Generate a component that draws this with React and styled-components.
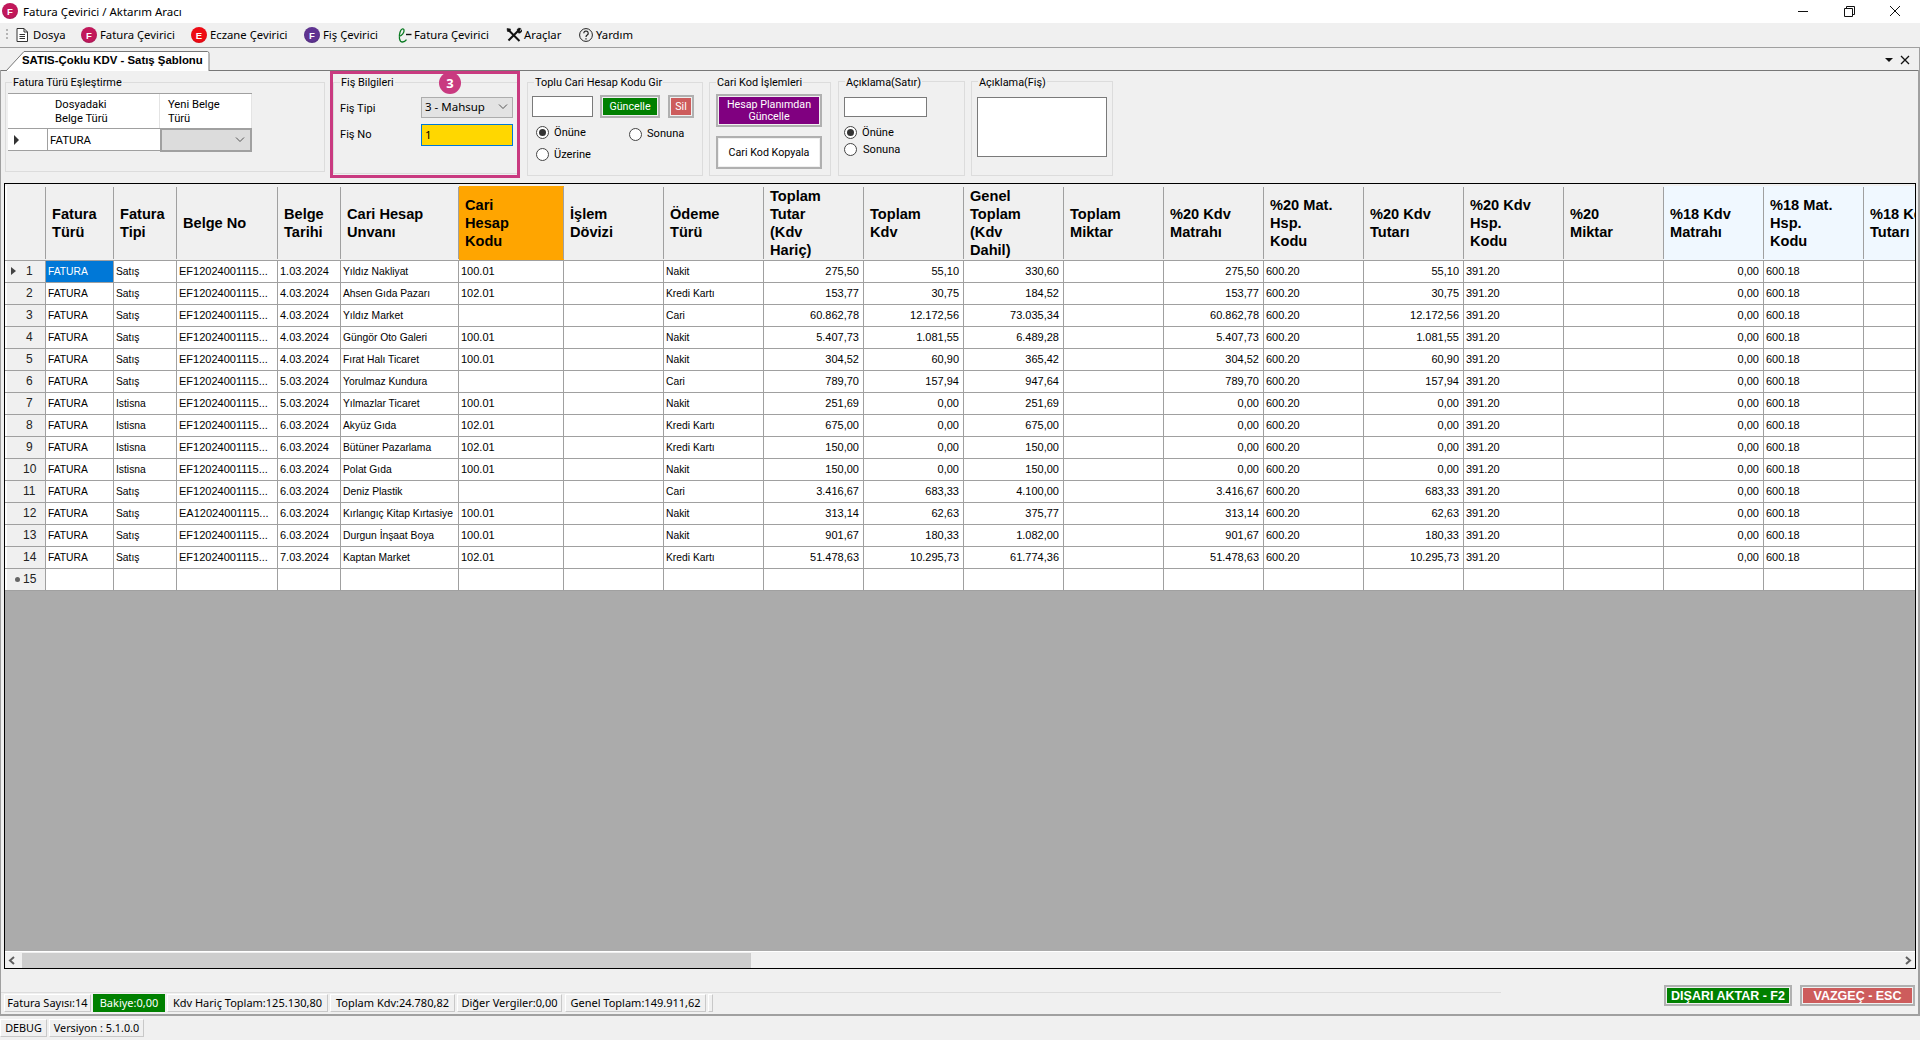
import React from "react";
import styled, { createGlobalStyle, css } from "styled-components";

const UI = `"Noto Sans", "Liberation Sans", sans-serif`;
const LABEL = `Roboto, "Liberation Sans", sans-serif`;
const GRID = `"Liberation Sans", Arial, sans-serif`;

const GlobalStyle = createGlobalStyle`
  html, body { margin: 0; padding: 0; background: #f0f0f0; overflow: hidden; }
  * { box-sizing: border-box; }
`;

const at = css`
  position: absolute;
  left: ${(p) => p.$x}px;
  top: ${(p) => p.$y}px;
  width: ${(p) => (p.$w ? `${p.$w}px` : "auto")};
  height: ${(p) => (p.$h ? `${p.$h}px` : "auto")};
`;

const Page = styled.div`
  position: relative;
  width: 1920px;
  height: 1040px;
  background: #f0f0f0;
  overflow: hidden;
  font-family: ${UI};
  font-size: 11px;
  color: #000;
`;

const TitleBar = styled.div`
  position: absolute;
  left: 0;
  top: 0;
  width: 1920px;
  height: 23px;
  background: #fff;
`;
const TitleText = styled.span`
  position: absolute;
  left: 23px;
  top: 3px;
  font-size: 11.5px;
  line-height: 18px;
`;
const WinIcon = styled.svg`
  position: absolute;
  left: ${(p) => p.$x}px;
  top: 4px;
  width: 14px;
  height: 14px;
  fill: none;
  stroke: #111;
  stroke-width: 1;
`;

const LogoDot = styled.span`
  ${at};
  width: 16px;
  height: 16px;
  border-radius: 50%;
  background: radial-gradient(circle at 50% 45%, ${(p) => p.$color} 55%, ${(p) => p.$edge} 100%);
  color: #fff;
  font: bold 9.5px ${GRID};
  display: flex;
  align-items: center;
  justify-content: center;
`;

const MenuBar = styled.div`
  position: absolute;
  left: 0;
  top: 23px;
  width: 1920px;
  height: 24px;
  background: #f0f0f0;
`;
const Grip = styled.span`
  position: absolute;
  left: 6px;
  top: 6px;
  width: 2px;
  height: 12px;
  background-image: linear-gradient(#b5b5b5 50%, transparent 50%);
  background-size: 2px 4px;
`;
const MenuText = styled.span`
  position: absolute;
  left: ${(p) => p.$x}px;
  top: 3px;
  font-size: 11.3px;
  line-height: 18px;
  white-space: nowrap;
`;
const MenuIcon = styled.svg`
  position: absolute;
  left: ${(p) => p.$x}px;
  top: 4px;
  width: 16px;
  height: 16px;
`;

const TabStrip = styled.div`
  position: absolute;
  left: 0;
  top: 47px;
  width: 1920px;
  height: 24px;
  border-top: 1px solid #a0a0a0;
  border-bottom: 1px solid #777;
  border-right: 1px solid #a0a0a0;
`;
const TabShape = styled.svg`
  position: absolute;
  left: 6px;
  top: 3px;
  width: 204px;
  height: 20px;
`;
const TabLabel = styled.span`
  position: absolute;
  left: 22px;
  top: 4px;
  font: bold 11.4px/16px ${GRID};
  white-space: nowrap;
`;
const StripGlyph = styled.svg`
  position: absolute;
  left: ${(p) => p.$x}px;
  top: 7px;
  width: 10px;
  height: 10px;
`;

const Panel = styled.div`
  position: absolute;
  left: 0;
  top: 70px;
  width: 1920px;
  height: 946px;
  border-left: 1px solid #a0a0a0;
  border-right: 2px solid #a0a0a0;
  border-bottom: 2px solid #a0a0a0;
`;

const GroupBox = styled.div`
  ${at};
  border: 1px solid #dcdcdc;
`;
const Legend = styled.span`
  position: absolute;
  left: 6px;
  top: ${(p) => p.$top || -8}px;
  padding: 0 1px;
  background: #f0f0f0;
  font-family: ${LABEL};
  font-size: 10.9px;
  line-height: 16px;
  white-space: nowrap;
`;

const Label = styled.span`
  ${at};
  font-family: ${LABEL};
  font-size: 11.1px;
  line-height: 16px;
  white-space: nowrap;
`;

const MapGrid = styled.div`
  position: absolute;
  left: 8px;
  top: 93px;
  width: 244px;
  height: 58px;
  background: #fff;
  border-top: 1px solid #a0a0a0;
`;
const MapHead = styled.div`
  ${at};
  border-right: 1px solid #e4e4e4;
  padding: 4px 0 0 8px;
  font-family: ${LABEL};
  font-size: 11.2px;
  line-height: 14px;
  white-space: pre-line;
`;
const MapLine = styled.div`
  position: absolute;
  left: 0;
  top: 34px;
  width: 244px;
  height: 23px;
  border-top: 1px solid #a0a0a0;
  border-bottom: 1px solid #a0a0a0;
`;
const MapArrow = styled.span`
  position: absolute;
  left: 6px;
  top: 6px;
  border-left: 5px solid #333;
  border-top: 5px solid transparent;
  border-bottom: 5px solid transparent;
`;
const MapDivider = styled.span`
  position: absolute;
  left: 39px;
  top: 0;
  height: 22px;
  width: 1px;
  background: #a0a0a0;
`;
const MapValue = styled.span`
  position: absolute;
  left: 42px;
  top: 3px;
  font-family: ${LABEL};
  font-size: 11.5px;
  line-height: 16px;
`;
const MapCombo = styled.div`
  position: absolute;
  left: 152px;
  top: -1px;
  width: 92px;
  height: 24px;
  background: #dcdcdc;
  border: 2px solid #a0a0a0;
`;

const Combo = styled.div`
  ${at};
  background: #e3e3e3;
  border: 1px solid #adadad;
  padding-left: 3px;
  font-size: 11.5px;
  line-height: 18px;
`;
const Chevron = styled.svg`
  position: absolute;
  right: ${(p) => p.$right || 4}px;
  top: ${(p) => p.$top || 5}px;
  width: 10px;
  height: 8px;
  fill: none;
  stroke: #555;
  stroke-width: 1;
`;
const TextInput = styled.div`
  ${at};
  background: #fff;
  border: 1px solid #7a7a7a;
`;
const CodeInput = styled.div`
  ${at};
  background: #ffd700;
  border: 1px solid #0078d7;
  padding-left: 3px;
  font-size: 11.5px;
  line-height: 19px;
`;

const Highlight = styled.div`
  position: absolute;
  left: 330px;
  top: 71px;
  width: 190px;
  height: 107px;
  border: 3px solid #c93a80;
`;
const StepBadge = styled.span`
  position: absolute;
  left: 439px;
  top: 72px;
  width: 22px;
  height: 22px;
  border-radius: 50%;
  background: #c93a80;
  color: #fff;
  font: bold 13px/22px ${UI};
  text-align: center;
`;

const ActionButton = styled.button`
  ${at};
  padding: 0;
  border: 2px solid #b0b0b0;
  outline: 1px solid #f0f0f0;
  outline-offset: -3px;
  background: ${(p) => p.$bg};
  color: ${(p) => p.$fg || "#fff"};
  font-family: ${LABEL};
  font-size: 10.7px;
  line-height: 12px;
  text-align: center;
`;
const FooterButton = styled(ActionButton)`
  font: bold 12.5px ${GRID};
`;

const Radio = styled.span`
  ${at};
  width: 13px;
  height: 13px;
  border-radius: 50%;
  background: #fff;
  border: 1px solid #444;
  ${(p) =>
    p.$on &&
    css`
      &::after {
        content: "";
        position: absolute;
        left: 2px;
        top: 2px;
        width: 7px;
        height: 7px;
        border-radius: 50%;
        background: #333;
      }
    `}
`;

const GridBox = styled.div`
  position: absolute;
  left: 4px;
  top: 183px;
  width: 1912px;
  height: 786px;
  background: #ababab;
  border: 1px solid #000;
  overflow: hidden;
  font-family: ${GRID};
`;
const HeaderRow = styled.div`
  display: flex;
  width: 2200px;
  height: 77px;
  background: #f0f0f0;
  border-bottom: 1px solid #a0a0a0;
`;
const HeaderCell = styled.div`
  position: relative;
  flex: none;
  width: ${(p) => p.$w}px;
  height: 74px;
  display: flex;
  align-items: center;
  padding-left: 6px;
  margin-top: 2px;
  background: ${(p) => p.$bg || "#f0f0f0"};
  font-size: 14.6px;
  font-weight: bold;
  line-height: 18px;
  white-space: pre-line;
  &::after {
    content: "";
    position: absolute;
    right: 0;
    top: 1px;
    bottom: 1px;
    width: 1px;
    background: #a0a0a0;
  }
`;
const CornerCell = styled(HeaderCell)`
  width: 41px;
  padding: 0;
  border-left: 2px solid #fff;
`;
const DataRow = styled.div`
  display: flex;
  width: 2200px;
  height: 22px;
  background: #fff;
  border-bottom: 1px solid #a0a0a0;
`;
const RowHead = styled.div`
  position: relative;
  flex: none;
  width: 41px;
  height: 21px;
  background: #f0f0f0;
  border-left: 2px solid #fff;
  border-right: 1px solid #a0a0a0;
  font-size: 12px;
  line-height: 20px;
  padding-left: ${(p) => (p.$wide ? 16 : 19)}px;
  color: #222;
`;
const RowArrow = styled.span`
  position: absolute;
  left: 4px;
  top: 6px;
  border-left: 5px solid #444;
  border-top: 4px solid transparent;
  border-bottom: 4px solid transparent;
`;
const NewDot = styled.span`
  position: absolute;
  left: 8px;
  top: 8px;
  width: 5px;
  height: 5px;
  border-radius: 50%;
  background: #666;
`;
const Cell = styled.div`
  flex: none;
  width: ${(p) => p.$w}px;
  height: 21px;
  padding: 0 ${(p) => (p.$right ? 4 : 2)}px 0 2px;
  border-right: 1px solid #a0a0a0;
  background: ${(p) => (p.$active ? "#0078d7" : "#fff")};
  color: ${(p) => (p.$active ? "#fff" : "#000")};
  font-size: ${(p) => (p.$tight ? 10.3 : 11)}px;
  line-height: ${(p) => (p.$tight ? 22 : 20)}px;
  text-align: ${(p) => (p.$right ? "right" : "left")};
  white-space: nowrap;
  overflow: hidden;
`;

const HScroll = styled.div`
  position: absolute;
  left: 0;
  bottom: 0;
  width: 100%;
  height: 17px;
  background: #f0f0f0;
  border-top: 1px solid #fff;
`;
const ScrollThumb = styled.div`
  position: absolute;
  left: 17px;
  top: 1px;
  width: 729px;
  height: 15px;
  background: #cdcdcd;
`;
const ScrollArrow = styled.svg`
  position: absolute;
  ${(p) => (p.$end ? "right: 3px;" : "left: 3px;")}
  top: 4px;
  width: 8px;
  height: 9px;
  fill: none;
  stroke: #606060;
  stroke-width: 2;
`;

const SummaryStrip = styled.div`
  position: absolute;
  left: 1px;
  top: 992px;
  width: 1500px;
  height: 23px;
  border-top: 1px solid #dcdcdc;
`;
const SummaryCell = styled.span`
  ${at};
  top: 1px;
  height: 18px;
  background: ${(p) => (p.$green ? "#008000" : "#f0f0f0")};
  color: ${(p) => (p.$green ? "#fff" : "#000")};
  border: 1px solid;
  border-color: ${(p) => (p.$green ? "#008000" : "#fff #c8c8c8 #c8c8c8 #fff")};
  font-size: 11px;
  line-height: 16px;
  text-align: center;
  white-space: nowrap;
`;
const StatusStrip = styled.div`
  position: absolute;
  left: 0;
  top: 1017px;
  width: 1920px;
  height: 23px;
`;
const StatusCell = styled.span`
  ${at};
  top: 2px;
  height: 18px;
  border: 1px solid;
  border-color: #fff #c8c8c8 #c8c8c8 #fff;
  font-size: 10.8px;
  line-height: 16px;
  text-align: center;
  white-space: nowrap;
`;

const columns = [
  ["Fatura\nTürü", 68],
  ["Fatura\nTipi", 63],
  ["Belge No", 101],
  ["Belge\nTarihi", 63],
  ["Cari Hesap\nUnvanı", 118],
  ["Cari\nHesap\nKodu", 105, "#ffa500"],
  ["İşlem\nDövizi", 100],
  ["Ödeme\nTürü", 100],
  ["Toplam\nTutar\n(Kdv\nHariç)", 100],
  ["Toplam\nKdv", 100],
  ["Genel\nToplam\n(Kdv\nDahil)", 100],
  ["Toplam\nMiktar", 100],
  ["%20 Kdv\nMatrahı", 100],
  ["%20 Mat.\nHsp.\nKodu", 100],
  ["%20 Kdv\nTutarı", 100],
  ["%20 Kdv\nHsp.\nKodu", 100],
  ["%20\nMiktar", 100],
  ["%18 Kdv\nMatrahı", 100, "#f0f8ff"],
  ["%18 Mat.\nHsp.\nKodu", 100, "#f0f8ff"],
  ["%18 Kdv\nTutarı", 100, "#f0f8ff"],
];

const rows = [
  ["Satış", "EF12024001115...", "1.03.2024", "Yıldız Nakliyat", "100.01", "Nakit", "275,50", "55,10", "330,60"],
  ["Satış", "EF12024001115...", "4.03.2024", "Ahsen Gıda Pazarı", "102.01", "Kredi Kartı", "153,77", "30,75", "184,52"],
  ["Satış", "EF12024001115...", "4.03.2024", "Yıldız Market", "", "Cari", "60.862,78", "12.172,56", "73.035,34"],
  ["Satış", "EF12024001115...", "4.03.2024", "Güngör Oto Galeri", "100.01", "Nakit", "5.407,73", "1.081,55", "6.489,28"],
  ["Satış", "EF12024001115...", "4.03.2024", "Fırat Halı Ticaret", "100.01", "Nakit", "304,52", "60,90", "365,42"],
  ["Satış", "EF12024001115...", "5.03.2024", "Yorulmaz Kundura", "", "Cari", "789,70", "157,94", "947,64"],
  ["Istisna", "EF12024001115...", "5.03.2024", "Yılmazlar Ticaret", "100.01", "Nakit", "251,69", "0,00", "251,69"],
  ["Istisna", "EF12024001115...", "6.03.2024", "Akyüz Gıda", "102.01", "Kredi Kartı", "675,00", "0,00", "675,00"],
  ["Istisna", "EF12024001115...", "6.03.2024", "Bütüner Pazarlama", "102.01", "Kredi Kartı", "150,00", "0,00", "150,00"],
  ["Istisna", "EF12024001115...", "6.03.2024", "Polat Gıda", "100.01", "Nakit", "150,00", "0,00", "150,00"],
  ["Satış", "EF12024001115...", "6.03.2024", "Deniz Plastik", "", "Cari", "3.416,67", "683,33", "4.100,00"],
  ["Satış", "EA12024001115...", "6.03.2024", "Kırlangıç Kitap Kırtasiye", "100.01", "Nakit", "313,14", "62,63", "375,77"],
  ["Satış", "EF12024001115...", "6.03.2024", "Durgun İnşaat Boya", "100.01", "Nakit", "901,67", "180,33", "1.082,00"],
  ["Satış", "EF12024001115...", "7.03.2024", "Kaptan Market", "102.01", "Kredi Kartı", "51.478,63", "10.295,73", "61.774,36"],
];

const rightCols = [8, 9, 10, 12, 14, 17];
const tightCols = [0, 1, 4, 7];

function rowCells(r) {
  const [tipi, belge, tarih, unvan, kod, odeme, tutar, kdv, genel] = r;
  const istisna = tipi === "Istisna";
  return [
    "FATURA", tipi, belge, tarih, unvan, kod, "", odeme, tutar, kdv, genel, "",
    istisna ? "0,00" : tutar, "600.20", kdv, "391.20", "", "0,00", "600.18", "",
  ];
}

function Grid() {
  return (
    <GridBox>
      <HeaderRow>
        <CornerCell $w={41} />
        {columns.map(([title, w, bg]) => (
          <HeaderCell key={title} $w={w} $bg={bg}>
            {title}
          </HeaderCell>
        ))}
      </HeaderRow>
      {rows.map((r, i) => (
        <DataRow key={i}>
          <RowHead $wide={i >= 9}>
            {i === 0 && <RowArrow />}
            {i + 1}
          </RowHead>
          {rowCells(r).map((v, c) => (
            <Cell
              key={c}
              $w={columns[c][1]}
              $right={rightCols.includes(c)}
              $tight={tightCols.includes(c)}
              $active={i === 0 && c === 0}
            >
              {v}
            </Cell>
          ))}
        </DataRow>
      ))}
      <DataRow>
        <RowHead $wide>
          <NewDot />
          15
        </RowHead>
        {columns.map(([title, w]) => (
          <Cell key={title} $w={w} />
        ))}
      </DataRow>
      <HScroll>
        <ScrollArrow viewBox="0 0 8 9">
          <path d="M6 1 2 4.5 6 8" />
        </ScrollArrow>
        <ScrollThumb />
        <ScrollArrow $end viewBox="0 0 8 9">
          <path d="M2 1 6 4.5 2 8" />
        </ScrollArrow>
      </HScroll>
    </GridBox>
  );
}

function Menu() {
  return (
    <MenuBar>
      <Grip />
      <MenuIcon $x={14} viewBox="0 0 16 16" fill="none" stroke="#333" strokeWidth="1">
        <path d="M3 1.5h7l3.5 3.5v9.5h-10.5z" fill="#fff" />
        <path d="M10 1.5v3.5h3.5M5.5 7.5h5.5M5.5 9.5h5.5M5.5 11.5h5.5" />
      </MenuIcon>
      <MenuText $x={33}>Dosya</MenuText>
      <LogoDot $x={81} $y={4} $color="#c2185b" $edge="#7c1a4b">F</LogoDot>
      <MenuText $x={100}>Fatura Çevirici</MenuText>
      <LogoDot $x={191} $y={4} $color="#ee0a14" $edge="#b80a14">E</LogoDot>
      <MenuText $x={210}>Eczane Çevirici</MenuText>
      <LogoDot $x={304} $y={4} $color="#5f3391" $edge="#3c2363">F</LogoDot>
      <MenuText $x={323}>Fiş Çevirici</MenuText>
      <MenuIcon $x={396} viewBox="0 0 16 16" fill="none" stroke="#0a7a22" strokeWidth="1.3">
        <path d="M3 9.5C6 8.5 8.5 5.5 8 3 7.5.9 5 1.8 4 5.2 2.8 9 3 15 6.5 15c1.6 0 3-1 4-2.4" />
        <path d="M10 7.5h5.5" stroke="#111" strokeWidth="1.4" />
      </MenuIcon>
      <MenuText $x={414}>Fatura Çevirici</MenuText>
      <MenuIcon $x={506} viewBox="0 0 16 16" fill="none" stroke="#111">
        <path d="M2 2.5 13.5 14" strokeWidth="2" />
        <path d="M14 2 2.5 13.5" strokeWidth="2" />
        <path d="M1 1.5 4.5 2 4 4.5 1.5 4.5z" fill="#111" strokeWidth="0.6" />
        <path d="M11 2.5a3 3 0 0 1 4-1l-2 2 1 1 2-2a3 3 0 0 1-3.6 3.6z" fill="#111" strokeWidth="0.4" />
      </MenuIcon>
      <MenuText $x={524}>Araçlar</MenuText>
      <MenuIcon $x={578} viewBox="0 0 16 16" fill="none" stroke="#222" strokeWidth="1">
        <circle cx="8" cy="8" r="6.4" />
        <path d="M5.8 6.2a2.2 2.2 0 1 1 3.4 1.9c-.8.5-1.2.9-1.2 1.9" strokeWidth="1.2" />
        <path d="M8 11.2v1.4" strokeWidth="1.3" />
      </MenuIcon>
      <MenuText $x={596}>Yardım</MenuText>
    </MenuBar>
  );
}

export default function App() {
  return (
    <Page>
      <GlobalStyle />
      <TitleBar>
        <LogoDot $x={2} $y={3} $color="#c2185b" $edge="#7c1a4b">F</LogoDot>
        <TitleText>Fatura Çevirici / Aktarım Aracı</TitleText>
        <WinIcon $x={1797} viewBox="0 0 14 14">
          <path d="M1 7.5h10" />
        </WinIcon>
        <WinIcon $x={1842} viewBox="0 0 14 14">
          <path d="M2.5 4.5h8v8h-8zM4.5 4.5v-2h8v8h-2" />
        </WinIcon>
        <WinIcon $x={1888} viewBox="0 0 14 14">
          <path d="M2 2l10 10M12 2 2 12" />
        </WinIcon>
      </TitleBar>
      <Menu />
      <TabStrip>
        <TabShape viewBox="0 0 204 20">
          <path d="M0 20 18 .5H201.5a2 2 0 0 1 1.5 2V20" fill="#fff" stroke="#777" />
        </TabShape>
        <TabLabel>SATIS-Çoklu KDV - Satış Şablonu</TabLabel>
        <StripGlyph $x={1884} viewBox="0 0 10 10">
          <path d="M1 3h8L5 7z" fill="#111" />
        </StripGlyph>
        <StripGlyph $x={1900} viewBox="0 0 10 10">
          <path d="M1 1l8 8M9 1 1 9" stroke="#111" strokeWidth="1.3" />
        </StripGlyph>
      </TabStrip>
      <Panel />

      <GroupBox $x={5} $y={82} $w={320} $h={90}>
        <Legend>Fatura Türü Eşleştirme</Legend>
      </GroupBox>
      <MapGrid>
        <MapHead $x={39} $y={0} $w={113} $h={34}>{"Dosyadaki\nBelge Türü"}</MapHead>
        <MapHead $x={152} $y={0} $w={92} $h={34}>{"Yeni Belge\nTürü"}</MapHead>
        <MapLine>
          <MapArrow />
          <MapDivider />
          <MapValue>FATURA</MapValue>
          <MapCombo>
            <Chevron $top={6} $right={5} viewBox="0 0 10 8">
              <path d="M1 1.5 5 5.5 9 1.5" />
            </Chevron>
          </MapCombo>
        </MapLine>
      </MapGrid>

      <GroupBox $x={333} $y={82} $w={185} $h={92}>
        <Legend>Fiş Bilgileri</Legend>
      </GroupBox>
      <Highlight />
      <StepBadge>3</StepBadge>
      <Label $x={340} $y={101}>Fiş Tipi</Label>
      <Combo $x={421} $y={97} $w={92} $h={21}>
        3 - Mahsup
        <Chevron viewBox="0 0 10 8">
          <path d="M1 1.5 5 5.5 9 1.5" />
        </Chevron>
      </Combo>
      <Label $x={340} $y={127}>Fiş No</Label>
      <CodeInput $x={421} $y={124} $w={92} $h={22}>1</CodeInput>

      <GroupBox $x={527} $y={82} $w={176} $h={94}>
        <Legend>Toplu Cari Hesap Kodu Gir</Legend>
      </GroupBox>
      <TextInput $x={532} $y={96} $w={61} $h={21} />
      <ActionButton $x={600} $y={95} $w={60} $h={23} $bg="#008000">Güncelle</ActionButton>
      <ActionButton $x={668} $y={95} $w={26} $h={23} $bg="#cd5c5c">Sil</ActionButton>
      <Radio $on $x={536} $y={126} />
      <Label $x={554} $y={125}>Önüne</Label>
      <Radio $x={629} $y={128} />
      <Label $x={647} $y={126}>Sonuna</Label>
      <Radio $x={536} $y={148} />
      <Label $x={554} $y={147}>Üzerine</Label>

      <GroupBox $x={709} $y={82} $w={122} $h={94}>
        <Legend>Cari Kod İşlemleri</Legend>
      </GroupBox>
      <ActionButton $x={716} $y={94} $w={106} $h={33} $bg="#800080">
        Hesap Planımdan
        <br />
        Güncelle
      </ActionButton>
      <ActionButton $x={716} $y={136} $w={106} $h={33} $bg="#fff" $fg="#000">
        Cari Kod Kopyala
      </ActionButton>

      <GroupBox $x={838} $y={81} $w={127} $h={95}>
        <Legend $top={-7}>Açıklama(Satır)</Legend>
      </GroupBox>
      <TextInput $x={844} $y={97} $w={83} $h={20} />
      <Radio $on $x={844} $y={126} />
      <Label $x={862} $y={125}>Önüne</Label>
      <Radio $x={844} $y={143} />
      <Label $x={863} $y={142}>Sonuna</Label>

      <GroupBox $x={971} $y={81} $w={142} $h={95}>
        <Legend $top={-7}>Açıklama(Fiş)</Legend>
      </GroupBox>
      <TextInput $x={977} $y={97} $w={130} $h={60} />

      <Grid />

      <FooterButton $x={1664} $y={985} $w={128} $h={21} $bg="#008000">DIŞARI AKTAR - F2</FooterButton>
      <FooterButton $x={1800} $y={985} $w={115} $h={21} $bg="#cd5c5c">VAZGEÇ - ESC</FooterButton>

      <SummaryStrip>
        <SummaryCell $x={3} $w={87}>Fatura Sayısı:14</SummaryCell>
        <SummaryCell $green $x={92} $w={72}>Bakiye:0,00</SummaryCell>
        <SummaryCell $x={166} $w={161}>Kdv Hariç Toplam:125.130,80</SummaryCell>
        <SummaryCell $x={329} $w={125}>Toplam Kdv:24.780,82</SummaryCell>
        <SummaryCell $x={456} $w={105}>Diğer Vergiler:0,00</SummaryCell>
        <SummaryCell $x={564} $w={141}>Genel Toplam:149.911,62</SummaryCell>
        <SummaryCell $x={707} $w={5} />
      </SummaryStrip>
      <StatusStrip>
        <StatusCell $x={0} $w={47}>DEBUG</StatusCell>
        <StatusCell $x={49} $w={95}>Versiyon : 5.1.0.0</StatusCell>
      </StatusStrip>
    </Page>
  );
}
